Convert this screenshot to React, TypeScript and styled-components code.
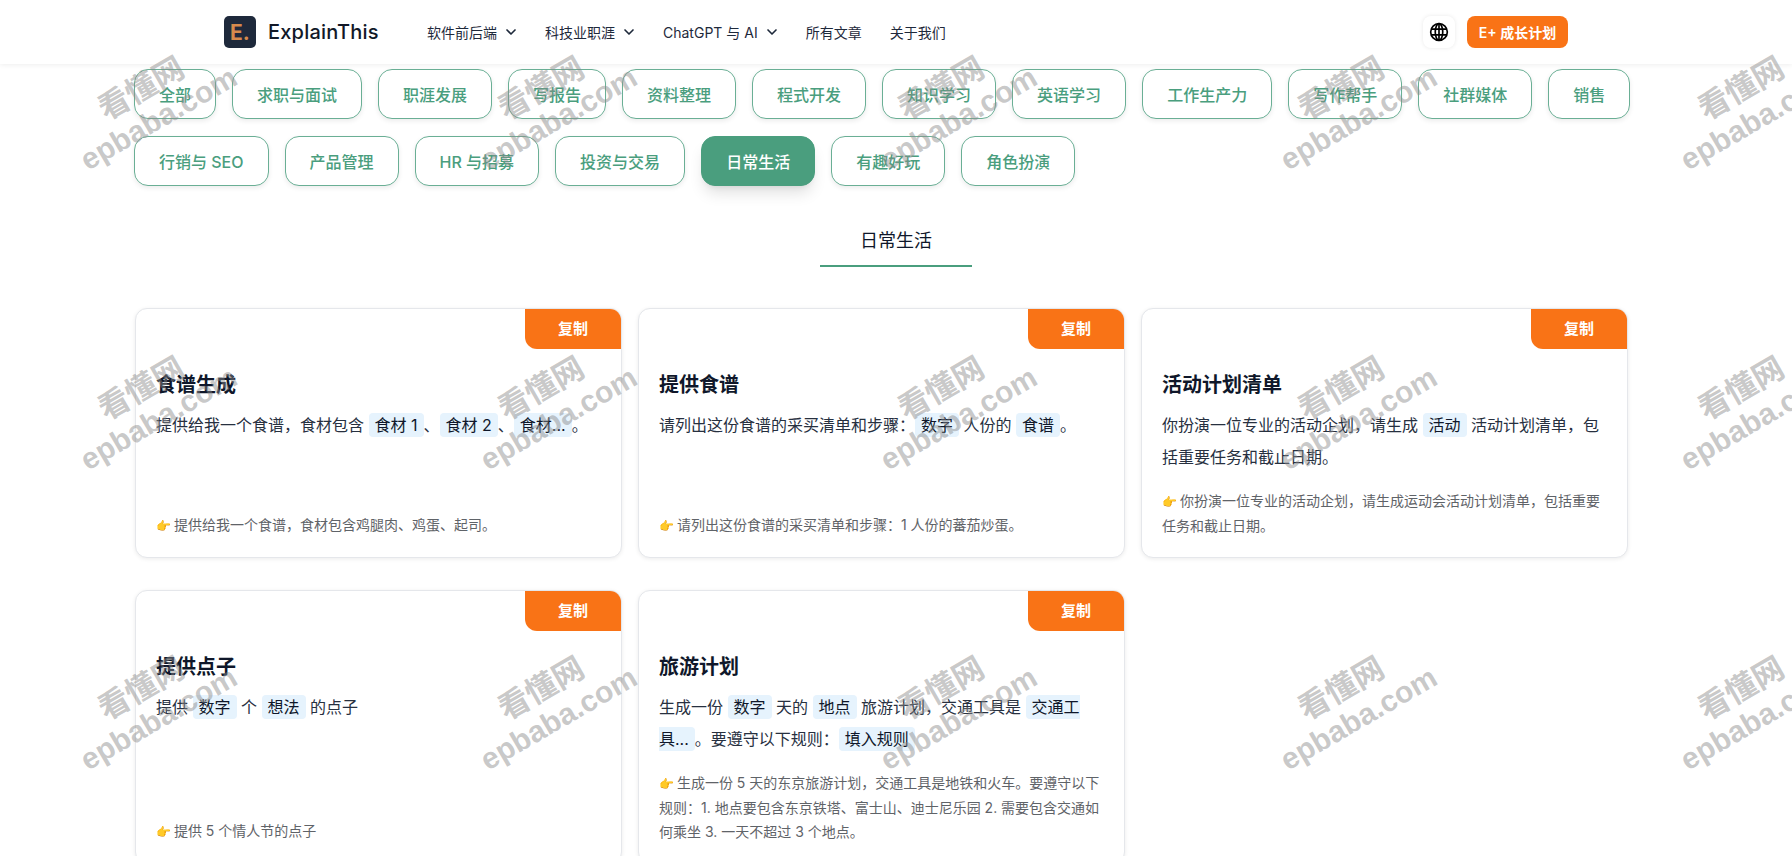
import React from 'react';
import styled, { createGlobalStyle } from 'styled-components';
import { ChevronDown } from 'lucide-react';

const Global = createGlobalStyle`
  html, body { margin: 0; padding: 0; background: #fff; }
  body { font-family: Inter, "Noto Sans CJK SC", sans-serif; color: #0f172a; overflow: hidden; height: 856px; }
  * { box-sizing: border-box; }
`;
const Page = styled.div`position: relative; height: 856px; overflow: hidden;`;
const Header = styled.header`
  height: 64px; display: flex; align-items: center; padding: 0 224px; background: #fff;
  box-shadow: 0 1px 5px rgba(0,0,0,.07); position: relative;
`;
const LogoMark = styled.div`
  width: 32px; height: 32px; border-radius: 5px; background: #1e293b; color: #d68a4c; font-weight: 700;
  font-size: 21px; display: flex; align-items: center; justify-content: center;
`;
const LogoText = styled.div`margin-left: 12px; font-size: 20px; font-weight: 500; letter-spacing: .2px; width: 159px; white-space: nowrap; color: #111827;`;
const Nav = styled.nav`display: flex; align-items: center; gap: 28px; flex: 1;`;
const NavItem = styled.a`display: flex; align-items: center; font-size: 14px; color: #1e293b; white-space: nowrap;
  svg { margin-left: 6px; margin-right: -2px; }`;
const IconBtn = styled.div`width: 32px; height: 32px; border-radius: 8px; background: #fff; box-shadow: 0 0 4px rgba(0,0,0,.09);
  display: flex; align-items: center; justify-content: center;`;
const PlusBtn = styled.div`margin-left: 12px; width: 101px; height: 32px; border-radius: 8px; background: #f97316; color: #fff;
  font-size: 14px; font-weight: 600; display: flex; align-items: center; justify-content: center; white-space: nowrap;`;
const Main = styled.main`padding: 5px 135px 0;`;
const Pills = styled.div`display: flex; flex-wrap: wrap; gap: 17px 16px; margin-left: -1px;`;
const Pill = styled.div<{ $active?: boolean }>`
  height: 50px; padding: 0 24px; border-radius: 14px; border: 1px solid ${p => (p.$active ? '#4a9e7e' : '#6aaf95')};
  display: flex; align-items: center; font-size: 16px; font-weight: 500; white-space: nowrap;
  color: ${p => (p.$active ? '#fff' : '#4a9e7e')}; background: ${p => (p.$active ? '#4a9e7e' : '#fff')};
  box-shadow: ${p => (p.$active ? '0 10px 15px -3px rgba(0,0,0,.12), 0 4px 6px -4px rgba(0,0,0,.1)' : '0 2px 5px rgba(0,0,0,.08)')};
`;
const Tabs = styled.div`display: flex; justify-content: center; margin: 32px 0 41px;`;
const Tab = styled.div`width: 152px; height: 49px; line-height: 46px; text-align: center; font-size: 18px; border-bottom: 2px solid #4a9e7e; color: #0f172a;`;
const Grid = styled.div`display: grid; grid-template-columns: repeat(3, 487px); column-gap: 16px; row-gap: 32px;`;
const Card = styled.article`
  position: relative; border: 1px solid #e5e7eb; border-radius: 12px; background: #fff; padding: 62px 20px 19px;
  box-shadow: 0 1px 4px rgba(0,0,0,.08); display: flex; flex-direction: column; overflow: hidden;
`;
const Copy = styled.button`
  position: absolute; top: 0; right: 0; width: 96px; height: 40px; border: 0; padding: 0 0 3px; background: #f97316; color: #fff;
  border-bottom-left-radius: 12px; font: 600 15px Inter, "Noto Sans CJK SC", sans-serif;
`;
const Title = styled.h3`margin: 0; font-size: 20px; line-height: 28px; font-weight: 600; color: #0f172a;`;
const Prompt = styled.p`margin: 10px 0 16px; font-size: 16px; line-height: 32px; color: #27303f;`;
const C = styled.span`background: #e6f3fd; border-radius: 4px; padding: 2px 6px; color: #0f172a;`;
const Example = styled.p`margin: auto 0 0; font-size: 14px; line-height: 24px; color: #5f6368;`;
const Emoji = styled.span`font-size: 12px; margin-right: -1px;`;
const Marks = styled.div`position: absolute; inset: 0; pointer-events: none; overflow: hidden;`;
const Mark = styled.div`
  position: absolute; width: 220px; text-align: center; transform: translate(-50%, -50%) rotate(-30deg);
  color: rgba(140,140,140,.48); white-space: nowrap;
`;
const MarkTop = styled.div`font: 700 31px/37px "Noto Sans CJK SC", sans-serif;`;
const MarkBottom = styled.div`font: 700 30px/37px "Liberation Sans", sans-serif;`;

const row1 = ['全部','求职与面试','职涯发展','写报告','资料整理','程式开发','知识学习','英语学习','工作生产力','写作帮手','社群媒体','销售'];
const row2 = ['行销与 SEO','产品管理','HR 与招募','投资与交易','日常生活','有趣好玩','角色扮演'];

const cards = [
  { t: '食谱生成', p: <>提供给我一个食谱，食材包含 <C>食材 1</C>、<C>食材 2</C>、<C>食材...</C>。</>, e: '提供给我一个食谱，食材包含鸡腿肉、鸡蛋、起司。' },
  { t: '提供食谱', p: <>请列出这份食谱的采买清单和步骤：<C>数字</C> 人份的 <C>食谱</C>。</>, e: '请列出这份食谱的采买清单和步骤：1 人份的蕃茄炒蛋。' },
  { t: '活动计划清单', p: <>你扮演一位专业的活动企划，请生成 <C>活动</C> 活动计划清单，包括重要任务和截止日期。</>, e: '你扮演一位专业的活动企划，请生成运动会活动计划清单，包括重要任务和截止日期。' },
  { t: '提供点子', p: <>提供 <C>数字</C> 个 <C>想法</C> 的点子</>, e: '提供 5 个情人节的点子' },
  { t: '旅游计划', p: <>生成一份 <C>数字</C> 天的 <C>地点</C> 旅游计划，交通工具是 <C>交通工具...</C>。要遵守以下规则：<C>填入规则</C></>, e: '生成一份 5 天的东京旅游计划，交通工具是地铁和火车。要遵守以下规则：1. 地点要包含东京铁塔、富士山、迪士尼乐园 2. 需要包含交通如何乘坐 3. 一天不超过 3 个地点。' },
];
const markX = [149, 549, 949, 1349, 1749];
const markY = [102, 402, 702];

const GlobeIcon = () => (
  <svg width="20" height="20" viewBox="0 0 24 24" fill="none" stroke="#000" strokeWidth="2">
    <circle cx="12" cy="12" r="10" />
    <ellipse cx="12" cy="12" rx="4.5" ry="10" />
    <path d="M12 2v20M2.8 8.5h18.4M2.8 15.5h18.4" />
  </svg>
);

export default function App() {
  return (
    <Page>
      <Global />
      <Header>
        <LogoMark>E.</LogoMark>
        <LogoText>ExplainThis</LogoText>
        <Nav>
          <NavItem>软件前后端<ChevronDown size={16} strokeWidth={2.5} /></NavItem>
          <NavItem>科技业职涯<ChevronDown size={16} strokeWidth={2.5} /></NavItem>
          <NavItem>ChatGPT 与 AI<ChevronDown size={16} strokeWidth={2.5} /></NavItem>
          <NavItem>所有文章</NavItem>
          <NavItem>关于我们</NavItem>
        </Nav>
        <IconBtn><GlobeIcon /></IconBtn>
        <PlusBtn>E+ 成长计划</PlusBtn>
      </Header>
      <Main>
        <Pills>
          {row1.map(x => <Pill key={x}>{x}</Pill>)}
          {row2.map(x => <Pill key={x} $active={x === '日常生活'}>{x}</Pill>)}
        </Pills>
        <Tabs><Tab>日常生活</Tab></Tabs>
        <Grid>
          {cards.map(c => (
            <Card key={c.t}>
              <Copy>复制</Copy>
              <Title>{c.t}</Title>
              <Prompt>{c.p}</Prompt>
              <Example><Emoji>👉</Emoji> {c.e}</Example>
            </Card>
          ))}
        </Grid>
      </Main>
      <Marks>
        {markY.map(y => markX.map(x => (
          <Mark key={`${x}-${y}`} style={{ left: x, top: y }}>
            <MarkTop>看懂网</MarkTop>
            <MarkBottom>epbaba.com</MarkBottom>
          </Mark>
        )))}
      </Marks>
    </Page>
  );
}
